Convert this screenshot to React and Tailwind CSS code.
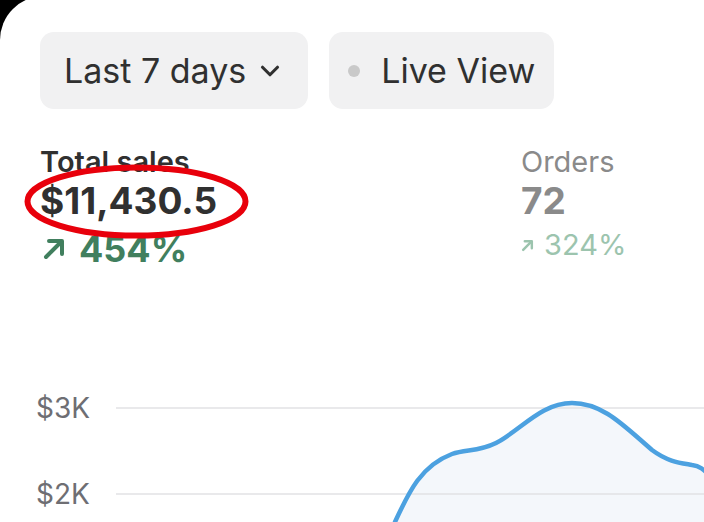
import { ChevronDown } from 'lucide-react';

const UpRight = ({ size, stroke, color }) => (
  <svg width={size} height={size} viewBox="0 0 24 24" fill="none" stroke={color} strokeWidth={stroke} strokeLinecap="round" strokeLinejoin="round">
    <path d="M4 20 L19 5" />
    <path d="M7 4 H20 V17" />
  </svg>
);

const curve =
  'M279 152 C292 124 304 96 336 84 C350 79 362 82 380 73 C405 60 425 33 456 33 C487 33 508 56 536 80 C552 92 565 93 576 95 C584 96 588 100 592 104';

const SalesChart = () => (
  <div className="flex -ml-1">
    {/* Y axis labels */}
    <div className="w-[80px] flex flex-col pt-[21px] text-[28px] leading-[34px] text-[#6e6e73]">
      <span>$3K</span>
      <span className="mt-[52px]">$2K</span>
    </div>
    <svg width="588" height="152" viewBox="0 0 588 152" className="block">
      <path d={curve + ' L592 152 L279 152 Z'} fill="#f4f7fb" />
      <line x1="0" y1="38" x2="588" y2="38" stroke="#e2e2e4" strokeWidth="1.6" />
      <line x1="0" y1="124" x2="588" y2="124" stroke="#e2e2e4" strokeWidth="1.6" />
      <path d={curve} fill="none" stroke="#4ca1e0" strokeWidth="4.5" strokeLinecap="round" />
    </svg>
  </div>
);

export default function App() {
  return (
    <div className="w-[704px] h-[522px] bg-black overflow-hidden font-['Inter',sans-serif]">
      <div className="-mt-1 h-[530px] bg-white rounded-tl-[44px] pl-10 pt-9">
        {/* Filters */}
        <div className="flex gap-[21px]">
          <div className="h-[77px] flex items-center gap-[9px] pl-[24px] pr-[23px] bg-[#f1f1f2] rounded-[14px] text-[34px] text-[#303030]">
            <span>Last 7 days</span>
            <ChevronDown size={30} strokeWidth={2.5} className="text-[#303030]" />
          </div>
          <div className="h-[77px] flex items-center gap-[21px] pl-[19px] pr-[19px] bg-[#f1f1f2] rounded-[14px] text-[34px] text-[#303030]">
            <span className="w-3 h-3 rounded-full bg-[#c9c9c9]" />
            <span>Live View</span>
          </div>
        </div>

        {/* Stats */}
        <div className="mt-[34px] grid grid-cols-[481px_1fr]">
          <div className="relative flex flex-col">
            <span className="text-[29px] leading-[38px] font-semibold text-[#303030]">Total sales</span>
            <span className="text-[37px] leading-[40px] font-bold text-[#303030]">$11,430.5</span>
            <div className="mt-2 h-[40px] flex items-center gap-[13px] pl-[2px] text-[36px] font-bold text-[#417f5e]">
              <UpRight size={24} stroke={4} color="#417f5e" />
              <span>454%</span>
            </div>
            {/* annotation */}
            <svg width="230" height="80" viewBox="0 0 230 80" className="absolute left-[-18px] top-[19px] pointer-events-none">
              <ellipse cx="114.5" cy="39.5" rx="109" ry="34" fill="none" stroke="#e8000b" strokeWidth="6" />
            </svg>
          </div>
          <div className="flex flex-col">
            <span className="text-[29px] leading-[38px] text-[#8a8a8a]">Orders</span>
            <span className="text-[37px] leading-[40px] font-bold text-[#8a8a8a]">72</span>
            <div className="mt-2 h-[32px] flex items-center gap-[10px] text-[29px] text-[#9cc4ae]">
              <UpRight size={13} stroke={4.5} color="#9cc4ae" />
              <span>324%</span>
            </div>
          </div>
        </div>

        <div className="mt-[101px]">
          <SalesChart />
        </div>
      </div>
    </div>
  );
}
